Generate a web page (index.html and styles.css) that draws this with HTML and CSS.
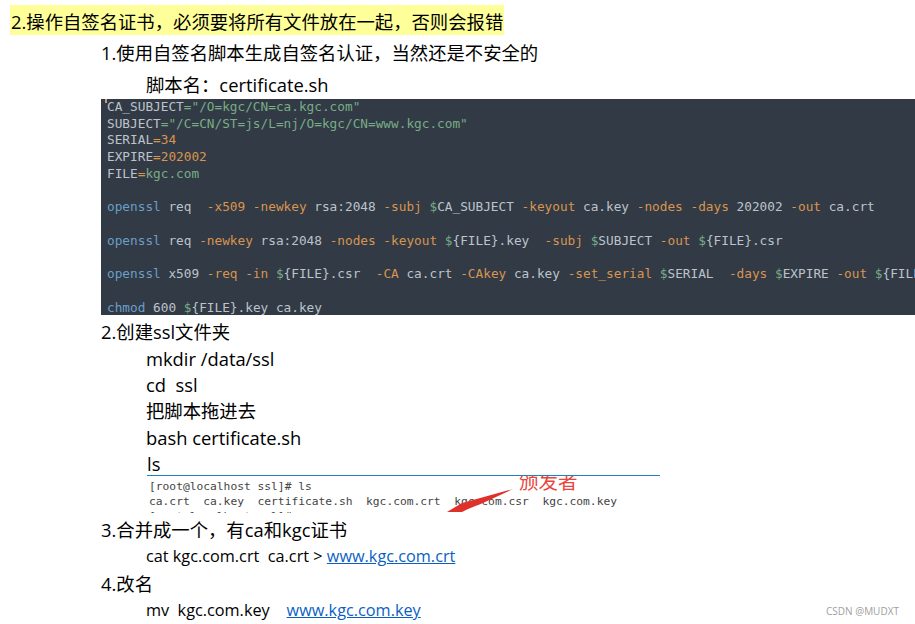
FILE: index.html
```html
<!DOCTYPE html>
<html lang="zh-CN">
<head>
<meta charset="utf-8">
<title>自签名证书</title>
<link rel="stylesheet" href="styles.css">
</head>
<body>
<main class="page">
  <div class="heading-row"><span class="heading">2.操作自签名证书，必须要将所有文件放在一起，否则会报错</span></div>
  <p class="line l1 h31">1.使用自签名脚本生成自签名认证，当然还是不安全的</p>
  <p class="line l2 h32">脚本名：certificate.sh</p>
  <pre class="code"><span class="caret"></span><span class="v">CA_SUBJECT</span><span class="s">=</span><span class="s">"/O=kgc/CN=ca.kgc.com"</span>
<span class="v">SUBJECT</span><span class="s">=</span><span class="s">"/C=CN/ST=js/L=nj/O=kgc/CN=www.kgc.com"</span>
<span class="v">SERIAL</span><span class="o">=34</span>
<span class="v">EXPIRE</span><span class="o">=202002</span>
<span class="v">FILE</span><span class="o">=</span><span class="s">kgc.com</span>

<span class="b">openssl</span> req  <span class="o">-x509 -newkey</span> rsa:2048 <span class="o">-subj</span> <span class="s">$</span>CA_SUBJECT <span class="o">-keyout</span> ca.key <span class="o">-nodes -days</span> 202002 <span class="o">-out</span> ca.crt

<span class="b">openssl</span> req <span class="o">-newkey</span> rsa:2048 <span class="o">-nodes -keyout</span> <span class="s">$</span>{FILE}.key  <span class="o">-subj</span> <span class="s">$</span>SUBJECT <span class="o">-out</span> <span class="s">$</span>{FILE}.csr

<span class="b">openssl</span> x509 <span class="o">-req -in</span> <span class="s">$</span>{FILE}.csr  <span class="o">-CA</span> ca.crt <span class="o">-CAkey</span> ca.key <span class="o">-set_serial</span> <span class="s">$</span>SERIAL  <span class="o">-days</span> <span class="s">$</span>EXPIRE <span class="o">-out</span> <span class="s">$</span>{FILE}.crt

<span class="b">chmod</span> 600 <span class="s">$</span>{FILE}.key ca.key</pre>
  <p class="line l1 h34">2.创建ssl文件夹</p>
  <p class="line l2 h27">mkdir /data/ssl</p>
  <p class="line l2 h25">cd&nbsp; ssl</p>
  <p class="line l2 h28">把脚本拖进去</p>
  <p class="line l2 h26">bash certificate.sh</p>
  <p class="line h26 rule-line">ls</p>
  <div class="shot">
    <pre class="term">[root@localhost ssl]# ls
ca.crt  ca.key  certificate.sh  kgc.com.crt  kgc.com.csr  kgc.com.key
[root@localhost ssl]#</pre>
    <span class="note">颁发者</span>
    <svg class="arrow" width="70" height="38" viewBox="0 0 70 38"><path d="M67 13 L27 24 L16 27 L1 36 L16 36 L22 33 L37 27 Z" fill="#e0302a"/></svg>
  </div>
  <p class="line l1 h3">3.合并成一个，有ca和kgc证书</p>
  <p class="line l2 h26 small">cat kgc.com.crt&nbsp; ca.crt &gt; <a href="#">www.kgc.com.crt</a></p>
  <p class="line l1 h4">4.改名</p>
  <p class="line l2 h26 small">mv&nbsp; kgc.com.key &nbsp;&nbsp; <a href="#">www.kgc.com.key</a></p>
  <span class="mark">CSDN @MUDXT</span>
</main>
</body>
</html>
```
FILE: styles.css
```css
html, body {
  margin: 0;
  padding: 0;
  background: #fff;
}
body {
  width: 915px;
  height: 624px;
  overflow: hidden;
}
.page {
  position: relative;
  width: 915px;
  height: 624px;
  overflow: hidden;
  padding-top: 5px;
  box-sizing: border-box;
  font-family: "Open Sans", "Noto Sans CJK SC", sans-serif;
  font-size: 18.35px;
  color: #000;
}
.heading-row {
  padding-left: 10px;
  height: 30px;
}
.heading {
  display: inline-block;
  height: 30px;
  line-height: 33px;
  padding: 0 1px;
  background: #ffff99;
  white-space: nowrap;
}
.line {
  margin: 0;
  white-space: nowrap;
}
.l1 { padding-left: 101px; }
.l2 { padding-left: 146px; }
.h25 { height: 25px; line-height: 25px; }
.h26 { height: 26px; line-height: 26px; }
.h27 { height: 27px; line-height: 27px; }
.h28 { height: 28px; line-height: 28px; }
.h31 { height: 31px; line-height: 36px; }
.h32 { height: 33px; line-height: 38px; }
.h34 { height: 30px; line-height: 34px; }
.h3 { height: 30px; line-height: 34px; }
.h4 { height: 28px; line-height: 30px; }
.small { font-size: 16.25px; }
.rule-line {
  margin-left: 147px;
  border-bottom: 1px solid #2080c0;
  width: 513px;
  height: 24px;
}
.code {
  position: relative;
  margin: 0 0 0 101px;
  padding: 0 0 0 6px;
  height: 216px;
  overflow: hidden;
  background: #323a45;
  color: #bcc3cb;
  font-family: "DejaVu Sans Mono", monospace;
  font-size: 12.75px;
  line-height: 16.72px;
}
.caret {
  position: absolute;
  left: 4px;
  top: 0;
  width: 2px;
  height: 4px;
  background: #d19a66;
}
.v { color: #bcc3cb; }
.o { color: #d8954f; }
.s { color: #78ad85; }
.b { color: #6a9fc8; }
.shot {
  position: relative;
  height: 37px;
  margin-left: 147px;
  padding-left: 2px;
  overflow: hidden;
}
.term {
  margin: 0;
  padding-top: 3px;
  font-family: "DejaVu Sans Mono", monospace;
  font-size: 11.27px;
  line-height: 15px;
  color: #444;
}
.note {
  position: absolute;
  left: 372px;
  top: -6px;
  font-size: 19.5px;
  line-height: 24px;
  color: #e8453c;
}
.arrow {
  position: absolute;
  left: 299px;
  top: 0;
}
a {
  color: #0b5fc4;
  text-decoration: underline;
}
.mark {
  position: absolute;
  left: 826px;
  top: 604px;
  font-size: 10px;
  line-height: 14px;
  color: #a0a0a0;
}
```
